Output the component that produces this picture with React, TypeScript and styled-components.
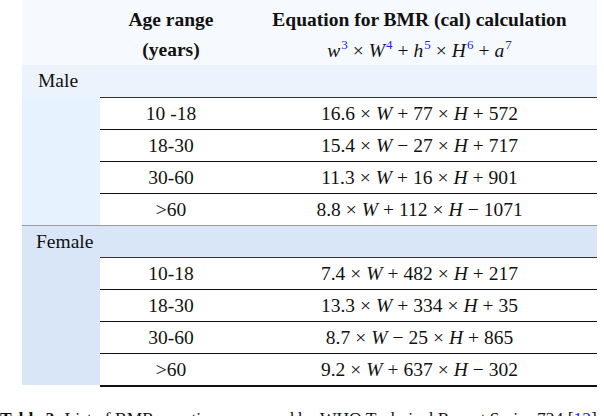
import styled, {createGlobalStyle} from "styled-components";
import {Fragment} from "react";

const Global = createGlobalStyle`
    html, body {
        margin: 0;
        padding: 0;
        background: #fff;
    }
    body {
        width: 604px;
        height: 416px;
        overflow: hidden;
        font-family: "Liberation Serif", "Times New Roman", serif;
        color: #111;
    }
`;

const Page = styled.div`
    padding: 0 7px 0 22px;
`;

const Grid = styled.div`
    display: grid;
    grid-template-columns: 78px 142px 1fr;
`;

const HeadCell = styled.div`
    background: #f6f9fe;
    display: flex;
    flex-direction: column;
    align-items: center;
    padding-top: 5px;
    height: 60px;
    font-size: 19.5px;
    line-height: 30px;
    font-weight: 700;
    white-space: nowrap;
`;

const Formula = styled.span`
    font-weight: 400;
    font-style: italic;
    padding-top: 1px;

    sup {
        font-style: normal;
        color: #1a1aff;
        font-size: 13px;
        vertical-align: 8px;
        line-height: 0;
        margin-left: 1px;
    }
`;

const Op = styled.span`
    font-style: normal;
    margin: 0 5px;
`;

const GroupLabel = styled.div<{ $bg: string; $top?: boolean }>`
    grid-column: 1 / 4;
    background: ${p => p.$bg};
    height: 32px;
    line-height: 32px;
    font-size: 19.5px;
    padding-left: ${p => (p.$top ? "14px" : "16px")};
    border-top: ${p => (p.$top ? "1.5px solid #9a9aa0" : "none")};
    box-sizing: border-box;
`;

const Side = styled.div<{ $bg: string }>`
    grid-row: span 4;
    background: ${p => p.$bg};
`;

const Cell = styled.div<{ $first?: boolean }>`
    height: 32px;
    display: flex;
    align-items: center;
    justify-content: center;
    font-size: 19.5px;
    padding-top: 1px;
    border-top: 1.5px solid ${p => (p.$first ? "#333" : "#111")};
    box-sizing: border-box;
    white-space: nowrap;
`;

const Eq = styled.span`
    i {
        font-style: italic;
    }
`;

const BottomRule = styled.div`
    grid-column: 2 / 4;
    border-top: 2px solid #111;
`;

const Caption = styled.div`
    margin: 21px 0 0 -22px;
    font-size: 17.5px;
    line-height: 20px;
    white-space: nowrap;
    b {
        font-weight: 700;
    }
    a {
        color: #1a1aff;
    }
`;

type Row = { age: string; eq: [string, string, string, string, string] };

const male: Row[] = [
    {age: "10 -18", eq: ["16.6", "+", "77", "+", "572"]},
    {age: "18-30", eq: ["15.4", "−", "27", "+", "717"]},
    {age: "30-60", eq: ["11.3", "+", "16", "+", "901"]},
    {age: ">60", eq: ["8.8", "+", "112", "−", "1071"]},
];

const female: Row[] = [
    {age: "10-18", eq: ["7.4", "+", "482", "+", "217"]},
    {age: "18-30", eq: ["13.3", "+", "334", "+", "35"]},
    {age: "30-60", eq: ["8.7", "−", "25", "+", "865"]},
    {age: ">60", eq: ["9.2", "+", "637", "−", "302"]},
];

function Equation({eq}: { eq: Row["eq"] }) {
    return (
        <Eq>
            {eq[0]}<Op>×</Op><i>W</i><Op>{eq[1]}</Op>{eq[2]}<Op>×</Op><i>H</i><Op>{eq[3]}</Op>{eq[4]}
        </Eq>
    );
}

function Group({rows, sideBg}: { rows: Row[]; sideBg: string }) {
    return (
        <>
            <Side $bg={sideBg}/>
            {rows.map((r, i) => (
                <Fragment key={i}>
                    <Cell $first={i === 0}>{r.age}</Cell>
                    <Cell $first={i === 0}><Equation eq={r.eq}/></Cell>
                </Fragment>
            ))}
        </>
    );
}

function App() {
    return (
        <Page>
            <Global/>
            <Grid>
                <HeadCell/>
                <HeadCell>
                    <span>Age range</span>
                    <span>(years)</span>
                </HeadCell>
                <HeadCell>
                    <span>Equation for BMR (cal) calculation</span>
                    <Formula>
                        w<sup>3</sup><Op>×</Op>W<sup>4</sup><Op>+</Op>h<sup>5</sup><Op>×</Op>H<sup>6</sup><Op>+</Op>a<sup>7</sup>
                    </Formula>
                </HeadCell>

                <GroupLabel $bg="#edf3fc">Male</GroupLabel>
                <Group rows={male} sideBg="#e6f2fd"/>

                <GroupLabel $bg="#d9e6f8" $top>Female</GroupLabel>
                <Group rows={female} sideBg="#d9e6f8"/>

                <BottomRule/>
            </Grid>
            <Caption>
                <b>Table 2:</b> List of BMR equations proposed by WHO Technical Report Series 724 [<a>12</a>]
            </Caption>
        </Page>
    );
}

export default App;
